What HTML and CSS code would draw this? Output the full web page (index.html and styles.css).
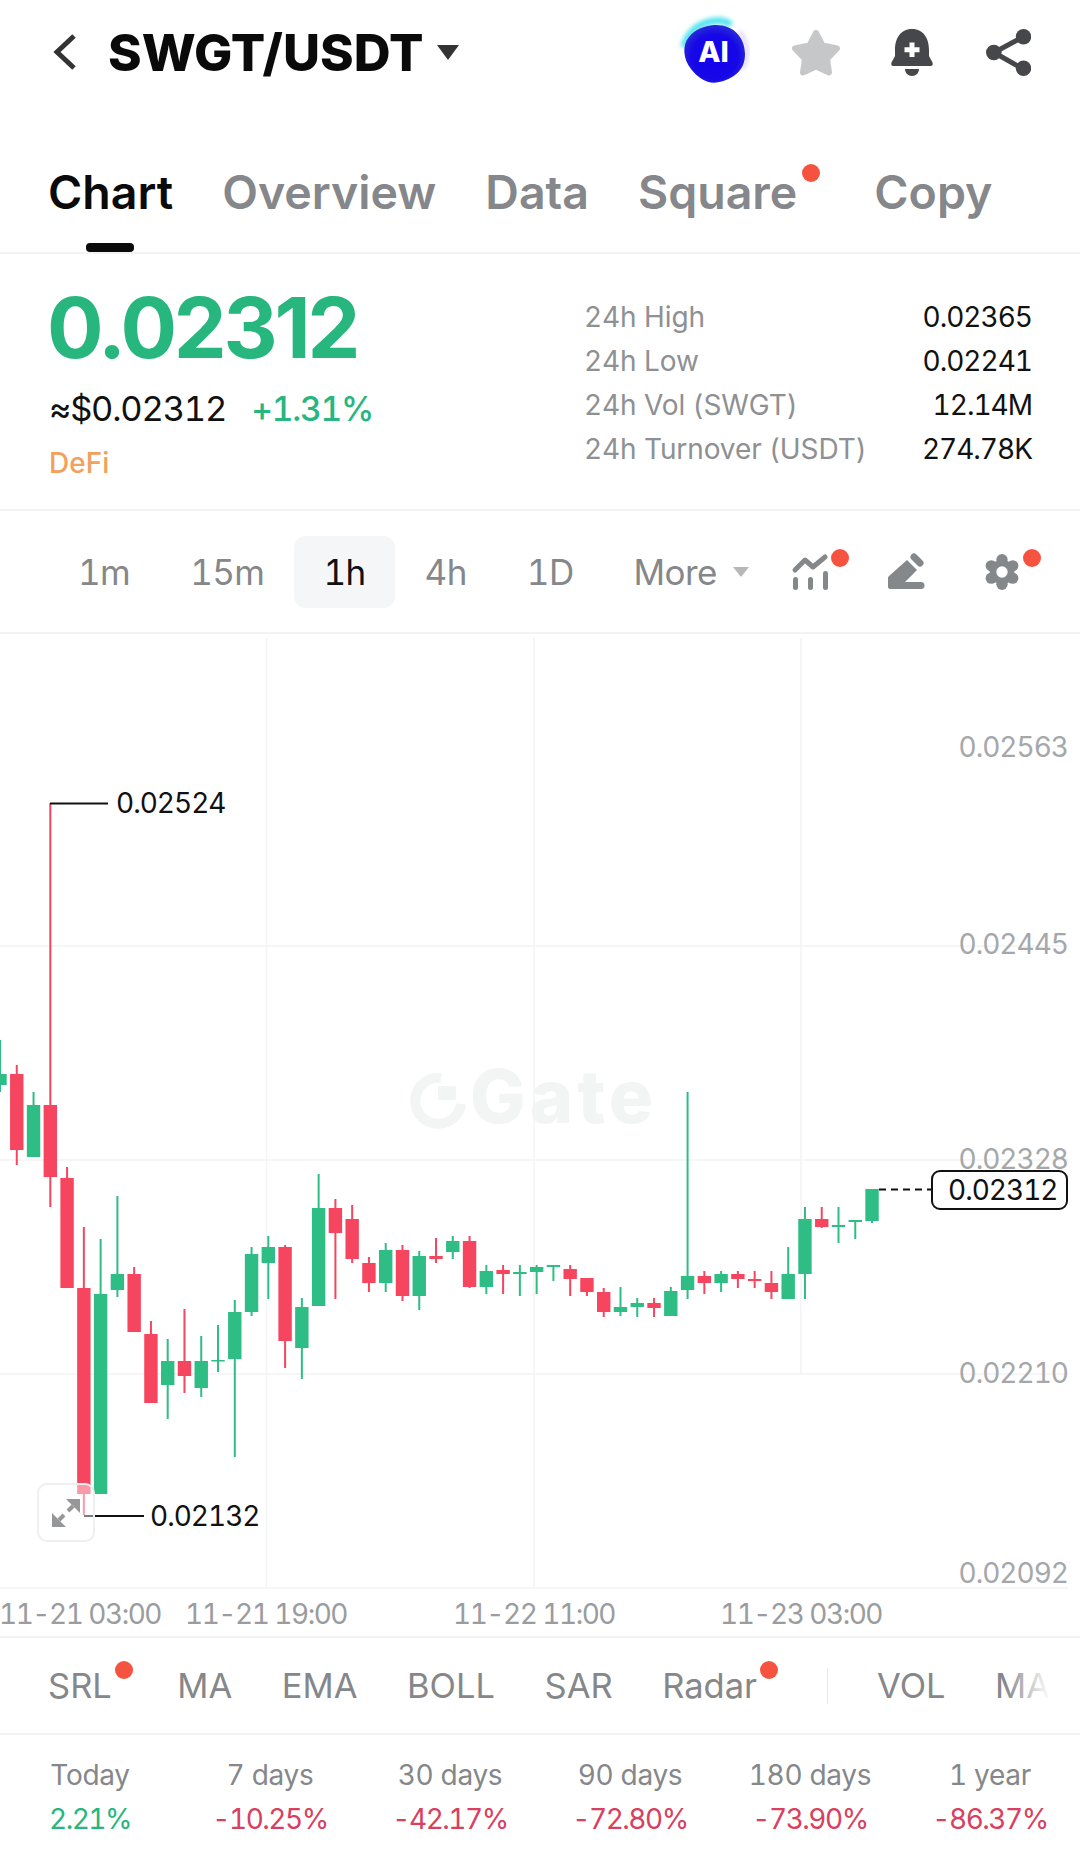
FILE: index.html
```html
<!DOCTYPE html>
<html lang="en">
<head>
  <meta charset="UTF-8" />
  <meta name="viewport" content="width=device-width, initial-scale=1" />
  <title>SWGT/USDT</title>
  <link rel="stylesheet" href="styles.css">
</head>
<body>
  <!-- Top bar -->
  <div class="topbar">
    <svg class="back" viewBox="0 0 24 38"><path d="M21 3 L4 19 L21 35" /></svg>
    <h1 class="pair">SWGT/USDT</h1>
    <span class="pair-caret"></span>
    <div class="top-icons">
      <svg class="ic-ai" viewBox="0 0 70 70">
        <defs>
          <radialGradient id="aiFill" cx="50%" cy="55%" r="55%">
            <stop offset="0%" stop-color="#1400ee" />
            <stop offset="70%" stop-color="#1608e6" />
            <stop offset="100%" stop-color="#2a2ad8" />
          </radialGradient>
          <filter id="aiBlur" x="-30%" y="-30%" width="160%" height="160%"><feGaussianBlur stdDeviation="2.2" /></filter>
        </defs>
        <path d="M5 30 C10 6 40 -2 52 8" fill="none" stroke="#53e3ee" stroke-width="7" filter="url(#aiBlur)" />
        <path d="M60 14 C70 26 70 42 63 52" fill="none" stroke="#d8ccf8" stroke-width="3" filter="url(#aiBlur)" />
        <path d="M35 8 C54 7 66 20 66 37 C66 54 54 62 40 65 C30 68 20 62 12 52 C4 42 3 28 10 20 C16 12 25 9 35 8 Z" fill="url(#aiFill)" />
        <text x="34.5" y="45" text-anchor="middle" class="ai-text">AI</text>
      </svg>
      <svg class="ic-star" viewBox="0 0 50 47">
        <path d="M25 4 L31.5 16.5 L46 19.5 L36 30 L38 43.5 L25 37.5 L12 43.5 L14 30 L4 19.5 L18.5 16.5 Z" />
      </svg>
      <svg class="ic-bell" viewBox="0 0 42 47">
        <path d="M21 0 C9 0 4 10 4 21 V27 L0.5 33.5 Q-0.5 37 3 37 H39 Q42.5 37 41.5 33.5 L38 27 V21 C38 10 33 0 21 0 Z" />
        <path d="M14 40 H28 C28 44 25 47 21 47 C17 47 14 44 14 40 Z" />
        <path class="plus" d="M21 13.5 V28 M13.5 20.8 H28.5" />
      </svg>
      <svg class="ic-share" viewBox="0 0 45 47">
        <path class="share-line" d="M37 8 L8 23.5 L37 40" />
        <circle cx="37.5" cy="7.7" r="7.7" />
        <circle cx="7.8" cy="23.5" r="7.8" />
        <circle cx="37.5" cy="39.3" r="7.7" />
      </svg>
    </div>
  </div>

  <!-- Tabs -->
  <div class="tabs">
    <div class="tab active">Chart</div>
    <div class="tab">Overview</div>
    <div class="tab">Data</div>
    <div class="tab has-dot">Square<span class="dot"></span></div>
    <div class="tab">Copy</div>
  </div>

  <!-- Price summary -->
  <div class="summary">
    <div class="summary-left">
      <div class="last-price">0.02312</div>
      <div class="sub-price"><span>≈$0.02312</span><span class="up">+1.31%</span></div>
      <div class="tag">DeFi</div>
    </div>
    <div class="summary-right">
      <div class="stat"><span>24h High</span><b>0.02365</b></div>
      <div class="stat"><span>24h Low</span><b>0.02241</b></div>
      <div class="stat"><span>24h Vol (SWGT)</span><b>12.14M</b></div>
      <div class="stat"><span>24h Turnover (USDT)</span><b>274.78K</b></div>
    </div>
  </div>

  <!-- Intervals -->
  <div class="intervals">
    <div class="interval">1m</div>
    <div class="interval">15m</div>
    <div class="interval selected">1h</div>
    <div class="interval">4h</div>
    <div class="interval">1D</div>
    <div class="interval more">More<span class="more-caret"></span></div>
    <div class="tools">
      <div class="tool">
        <svg viewBox="0 0 36 36">
          <path class="tool-line" d="M3 16 L13 6 L21 13 L33 3" />
          <rect x="1" y="23" width="5" height="13" rx="2.5" />
          <rect x="16" y="23" width="5" height="13" rx="2.5" />
          <rect x="31" y="17" width="5" height="19" rx="2.5" />
        </svg>
        <span class="dot"></span>
      </div>
      <div class="tool">
        <svg viewBox="0 0 36 36">
          <path d="M0 33 V24 Q0 23 1 22 L19 6 L29 16 L17 28 H33 A3.5 3.5 0 0 1 33 35 H2 Q0 35 0 33 Z" />
          <path class="tool-line wide" d="M26 3 L32 9" />
        </svg>
      </div>
      <div class="tool">
        <svg viewBox="0 0 36 38">
          <circle cx="18" cy="19" r="13" />
          <circle cx="18" cy="6" r="6" />
          <circle cx="18" cy="32" r="6" />
          <circle cx="6.7" cy="12.5" r="6" />
          <circle cx="29.3" cy="12.5" r="6" />
          <circle cx="6.7" cy="25.5" r="6" />
          <circle cx="29.3" cy="25.5" r="6" />
          <circle class="hole" cx="18" cy="19" r="6" />
        </svg>
        <span class="dot"></span>
      </div>
    </div>
  </div>

  <!-- Chart, a free canvas in page coordinates -->
  <div class="chart">
    <svg id="chartSvg" class="chart-svg" viewBox="0 633 1080 1004">
      <g class="grid">
        <path d="M0 945 H1068 M0 1159 H1068 M0 1373 H1068 M0 1587 H1068" />
        <path d="M266.5 637 V1587 M534 637 V1587 M801 637 V1373" />
      </g>
      <g class="watermark">
        <path class="wm-ring" d="M441 1077 A23 23 0 1 0 461 1103" />
        <rect class="wm-dot" x="438" y="1085" width="18" height="14" rx="2" />
        <text x="470" y="1122">Gate</text>
      </g>
      <g id="candles" transform="translate(0 -1)"></g>
      <g class="y-axis">
        <text x="1068" y="756">0.02563</text>
        <text x="1068" y="953">0.02445</text>
        <text x="1068" y="1168">0.02328</text>
        <text x="1068" y="1382">0.02210</text>
        <text x="1068" y="1582">0.02092</text>
      </g>
      <g class="x-axis">
        <text x="80" y="1623">11-21 03:00</text>
        <text x="266" y="1623">11-21 19:00</text>
        <text x="534" y="1623">11-22 11:00</text>
        <text x="801" y="1623">11-23 03:00</text>
      </g>
      <g class="marks">
        <path class="mark-line" d="M50 802.5 H108 M84 1515 H144" />
        <text x="116" y="812">0.02524</text>
        <text x="150" y="1525">0.02132</text>
        <path class="last-dash" d="M879 1188.5 H931" />
        <rect class="last-box" x="932" y="1170" width="135" height="38" rx="8" />
        <text x="948" y="1199">0.02312</text>
      </g>
    </svg>
    <div class="expand">
      <svg viewBox="0 0 28 28">
        <path d="M14 0 H28 V14 Z M0 14 V28 H14 Z" />
        <path class="expand-stem" d="M21 7 L16 12 M7 21 L12 16" />
      </svg>
    </div>
  </div>

  <!-- Indicators -->
  <div class="indicators">
    <div class="ind has-dot">SRL<span class="dot"></span></div>
    <div class="ind">MA</div>
    <div class="ind">EMA</div>
    <div class="ind">BOLL</div>
    <div class="ind">SAR</div>
    <div class="ind has-dot">Radar<span class="dot"></span></div>
    <div class="ind-sep"></div>
    <div class="ind">VOL</div>
    <div class="ind">MA</div>
  </div>

  <!-- Period changes -->
  <div class="periods">
    <div class="period"><span>Today</span><b class="up">2.21%</b></div>
    <div class="period"><span>7 days</span><b class="down">-10.25%</b></div>
    <div class="period"><span>30 days</span><b class="down">-42.17%</b></div>
    <div class="period"><span>90 days</span><b class="down">-72.80%</b></div>
    <div class="period"><span>180 days</span><b class="down">-73.90%</b></div>
    <div class="period"><span>1 year</span><b class="down">-86.37%</b></div>
  </div>

  <script src="chart.js"></script>
</body>
</html>
```

FILE: styles.css
```css
body {
  margin: 0;
  width: 1080px;
  height: 1849px;
  overflow: hidden;
  background-color: #fff;
  font-family: 'Inter', 'Liberation Sans', sans-serif;
  font-variant-numeric: tabular-nums;
  color: #111;
}

.dot {
  position: absolute;
  width: 18px;
  height: 18px;
  border-radius: 50%;
  background-color: #f5533f;
}

.up { color: #26b67e; }
.down { color: #d8405f; }

/* Top bar */
.topbar {
  display: flex;
  align-items: center;
  height: 104px;
  padding: 0 49px 0 53px;
  box-sizing: border-box;
}

.back {
  width: 24px;
  height: 38px;
  margin-right: 31px;
}

.back path {
  fill: none;
  stroke: #333;
  stroke-width: 5;
}

.pair {
  margin: 0;
  font-size: 51px;
  font-weight: 800;
  color: #0a0a0a;
}

.pair-caret {
  width: 0;
  height: 0;
  margin: 0 0 0 14px;
  border-left: 11px solid transparent;
  border-right: 11px solid transparent;
  border-top: 15px solid #333;
}

.top-icons {
  display: flex;
  align-items: center;
  margin-left: auto;
}

.ic-ai { width: 70px; height: 70px; margin-right: 42px; overflow: visible; }
.ic-star { width: 50px; height: 47px; margin-right: 50px; }
.ic-bell { width: 42px; height: 47px; margin-right: 53px; }
.ic-share { width: 45px; height: 47px; }

.ai-text {
  font-size: 29px;
  font-weight: 800;
  fill: #fff;
}

.ic-star path {
  fill: #c5c7c9;
  stroke: #c5c7c9;
  stroke-width: 6;
  stroke-linejoin: round;
}

.ic-bell path { fill: #46474b; }

.ic-bell .plus {
  fill: none;
  stroke: #fff;
  stroke-width: 5;
}

.ic-share circle { fill: #46474b; }

.share-line {
  fill: none;
  stroke: #46474b;
  stroke-width: 5;
}

/* Tabs */
.tabs {
  display: flex;
  gap: 49px;
  height: 150px;
  padding-left: 48px;
  box-sizing: border-box;
  border-bottom: 2px solid #f2f3f4;
}

.tab {
  position: relative;
  padding-top: 62px;
  font-size: 46.5px;
  line-height: 53px;
  font-weight: 600;
  color: #85878a;
}

.tab.has-dot { margin-right: 28px; }

.tab .dot {
  top: 60px;
  right: -23px;
}

.tab.active { color: #0a0a0a; }

.tab.active::after {
  content: "";
  position: absolute;
  left: 38px;
  bottom: 0;
  width: 48px;
  height: 9px;
  border-radius: 4px;
  background-color: #0a0a0a;
}

/* Price summary */
.summary {
  display: flex;
  justify-content: space-between;
  height: 257px;
  box-sizing: border-box;
  padding: 0 48px 0 49px;
  border-bottom: 2px solid #f2f3f4;
}

.last-price {
  margin-top: 32px;
  margin-left: -2px;
  font-size: 84px;
  line-height: 84px;
  font-weight: 700;
  letter-spacing: -3.2px;
  font-variant-numeric: normal;
  color: #26b67e;
}

.sub-price {
  display: flex;
  gap: 25px;
  margin-top: 17px;
  font-size: 34.5px;
  line-height: 44px;
  letter-spacing: -1.2px;
}

.sub-price .up {
  font-size: 33.5px;
  font-weight: 500;
  letter-spacing: -1.2px;
}

.tag {
  margin-top: 14px;
  font-size: 28px;
  line-height: 36px;
  font-weight: 500;
  color: #f2a15c;
}

.summary-right {
  width: 448px;
  margin-top: 41px;
}

.stat {
  display: flex;
  justify-content: space-between;
  height: 44px;
  line-height: 44px;
  font-size: 28px;
  letter-spacing: -0.1px;
  color: #8e9093;
}

.stat b {
  font-weight: 400;
  letter-spacing: -1px;
  color: #111;
}

/* Intervals */
.intervals {
  display: flex;
  align-items: center;
  height: 123px;
  box-sizing: border-box;
  padding: 0 60px 0 48px;
  border-bottom: 2px solid #f2f3f4;
}

.interval {
  padding: 0 30px;
  height: 72px;
  border-radius: 12px;
  font-size: 35px;
  line-height: 72px;
  letter-spacing: -0.6px;
  color: #85878a;
}

.interval.selected {
  padding: 0 29px;
  background-color: #f5f6f7;
  color: #111;
}

.more {
  display: flex;
  align-items: center;
  gap: 16px;
  padding-right: 0;
}

.more-caret {
  width: 0;
  height: 0;
  border-left: 8px solid transparent;
  border-right: 8px solid transparent;
  border-top: 10px solid #b5b7b9;
}

.tools {
  display: flex;
  gap: 60px;
  margin-left: auto;
}

.tool {
  position: relative;
  width: 36px;
  height: 36px;
}

.tool svg {
  display: block;
  width: 36px;
  height: 36px;
  overflow: visible;
  fill: #85888b;
}

.tool-line {
  fill: none;
  stroke: #85888b;
  stroke-width: 5;
  stroke-linecap: round;
  stroke-linejoin: round;
}

.tool-line.wide { stroke-width: 7; }
.tool .hole { fill: #fff; }

.tool .dot {
  top: -5px;
  right: -21px;
}

/* Chart */
.chart {
  position: relative;
  height: 1004px;
  box-sizing: border-box;
  border-bottom: 2px solid #f2f3f4;
}

.chart-svg {
  display: block;
  width: 1080px;
  height: 1004px;
}

.grid path {
  fill: none;
  stroke: #f3f4f5;
  stroke-width: 1.5;
}

.watermark text {
  font-size: 74px;
  font-weight: 800;
  letter-spacing: 4px;
  fill: #f3f4f4;
}

.wm-ring {
  fill: none;
  stroke: #f3f4f4;
  stroke-width: 10;
}

.wm-dot { fill: #f3f4f4; }

.candle-up { fill: #2ebd85; }
.candle-down { fill: #f6455f; }

.y-axis text {
  font-size: 28px;
  letter-spacing: -1px;
  text-anchor: end;
  fill: #a5a7aa;
}

.x-axis text {
  font-size: 28px;
  letter-spacing: -1.5px;
  text-anchor: middle;
  fill: #9a9c9f;
}

.marks text {
  font-size: 28px;
  letter-spacing: -1px;
  fill: #111;
}

.mark-line {
  fill: none;
  stroke: #111;
  stroke-width: 2;
}

.last-dash {
  fill: none;
  stroke: #111;
  stroke-width: 2;
  stroke-dasharray: 7 5;
}

.last-box {
  fill: #fff;
  stroke: #111;
  stroke-width: 2;
}

.expand {
  position: absolute;
  left: 37px;
  top: 849px;
  width: 58px;
  height: 59px;
  box-sizing: border-box;
  border: 2px solid #eeeff0;
  border-radius: 10px;
  background-color: rgba(255, 255, 255, 0.45);
  display: flex;
  align-items: center;
  justify-content: center;
}

.expand svg {
  width: 28px;
  height: 28px;
  fill: #959799;
}

.expand-stem {
  fill: none;
  stroke: #959799;
  stroke-width: 4;
}

/* Indicators */
.indicators {
  position: relative;
  display: flex;
  align-items: center;
  gap: 49.5px;
  height: 97px;
  box-sizing: border-box;
  padding-left: 48px;
  overflow: hidden;
  border-bottom: 2px solid #f2f3f4;
}

.indicators::after {
  content: "";
  position: absolute;
  top: 0;
  bottom: 0;
  left: 1005px;
  width: 75px;
  background: linear-gradient(to right, rgba(255, 255, 255, 0), #fff 60%);
}

.ind {
  position: relative;
  font-size: 34.5px;
  color: #85878a;
  white-space: nowrap;
}

.ind.has-dot { margin-right: 16px; }

.ind .dot {
  top: -4px;
  right: -21px;
}

.ind-sep {
  width: 1px;
  height: 36px;
  margin-left: 4px;
  background-color: #e8e9ea;
}

/* Period changes */
.periods {
  display: grid;
  grid-template-columns: repeat(6, 180px);
}

.period {
  display: flex;
  flex-direction: column;
  align-items: center;
  padding-top: 22px;
  font-size: 28px;
  line-height: 36px;
  letter-spacing: -0.3px;
  color: #85878a;
}

.period b {
  margin-top: 8px;
  font-weight: 400;
  letter-spacing: -1.5px;
}
```

FILE: chart.js
```javascript
// [high, body top, body bottom, low, up?]
const candles = [
  [1040, 1074, 1085, 1092, 1], [1065, 1074, 1150, 1165, 0], [1092, 1105, 1157, 1157, 1],
  [803, 1105, 1177, 1207, 0], [1167, 1178, 1288, 1288, 0], [1227, 1288, 1494, 1515, 0],
  [1239, 1294, 1494, 1494, 1], [1196, 1274, 1290, 1297, 1], [1267, 1274, 1332, 1332, 0],
  [1321, 1334, 1403, 1403, 0], [1339, 1361, 1385, 1419, 1], [1309, 1361, 1376, 1393, 0],
  [1336, 1361, 1388, 1397, 1], [1325, 1360, 1361, 1372, 1], [1300, 1312, 1359, 1457, 1],
  [1247, 1254, 1312, 1316, 1], [1236, 1247, 1263, 1299, 1], [1245, 1247, 1341, 1368, 0],
  [1298, 1307, 1348, 1379, 1], [1174, 1208, 1306, 1306, 1], [1199, 1208, 1233, 1299, 0],
  [1205, 1219, 1259, 1263, 0], [1257, 1263, 1283, 1292, 0], [1243, 1250, 1283, 1292, 1],
  [1245, 1250, 1296, 1301, 0], [1251, 1256, 1296, 1310, 1], [1238, 1256, 1259, 1263, 0],
  [1236, 1241, 1252, 1259, 1], [1236, 1241, 1287, 1288, 0], [1265, 1271, 1287, 1294, 1],
  [1265, 1270, 1274, 1294, 0], [1265, 1272, 1274, 1296, 1], [1265, 1267, 1272, 1294, 1],
  [1265, 1265, 1267, 1281, 1], [1265, 1269, 1279, 1296, 0], [1278, 1278, 1292, 1296, 0],
  [1288, 1292, 1312, 1317, 0], [1287, 1307, 1312, 1316, 1], [1298, 1303, 1307, 1317, 1],
  [1298, 1303, 1308, 1317, 0], [1287, 1291, 1316, 1316, 1], [1092, 1276, 1290, 1299, 1],
  [1271, 1276, 1283, 1294, 0], [1271, 1274, 1283, 1292, 1], [1271, 1274, 1279, 1288, 0],
  [1271, 1279, 1281, 1288, 0], [1271, 1283, 1292, 1299, 0], [1247, 1274, 1299, 1299, 1],
  [1207, 1219, 1274, 1299, 1], [1207, 1219, 1227, 1228, 0], [1207, 1225, 1227, 1243, 1],
  [1220, 1220, 1222, 1239, 1], [1189, 1189, 1221, 1223, 1]
];

const STEP = 16.77;
const BODY = 13.4;
const NS = 'http://www.w3.org/2000/svg';
const layer = document.getElementById('candles');

candles.forEach((c, i) => {
  const x = i * STEP;
  const cls = c[4] ? 'candle-up' : 'candle-down';

  const wick = document.createElementNS(NS, 'rect');
  wick.setAttribute('x', x - 1);
  wick.setAttribute('y', c[0]);
  wick.setAttribute('width', 2);
  wick.setAttribute('height', c[3] - c[0]);
  wick.setAttribute('class', cls);
  layer.appendChild(wick);

  const body = document.createElementNS(NS, 'rect');
  body.setAttribute('x', x - BODY / 2);
  body.setAttribute('y', c[1]);
  body.setAttribute('width', BODY);
  body.setAttribute('height', Math.max(c[2] - c[1], 1.5));
  body.setAttribute('class', cls);
  layer.appendChild(body);
});
```
